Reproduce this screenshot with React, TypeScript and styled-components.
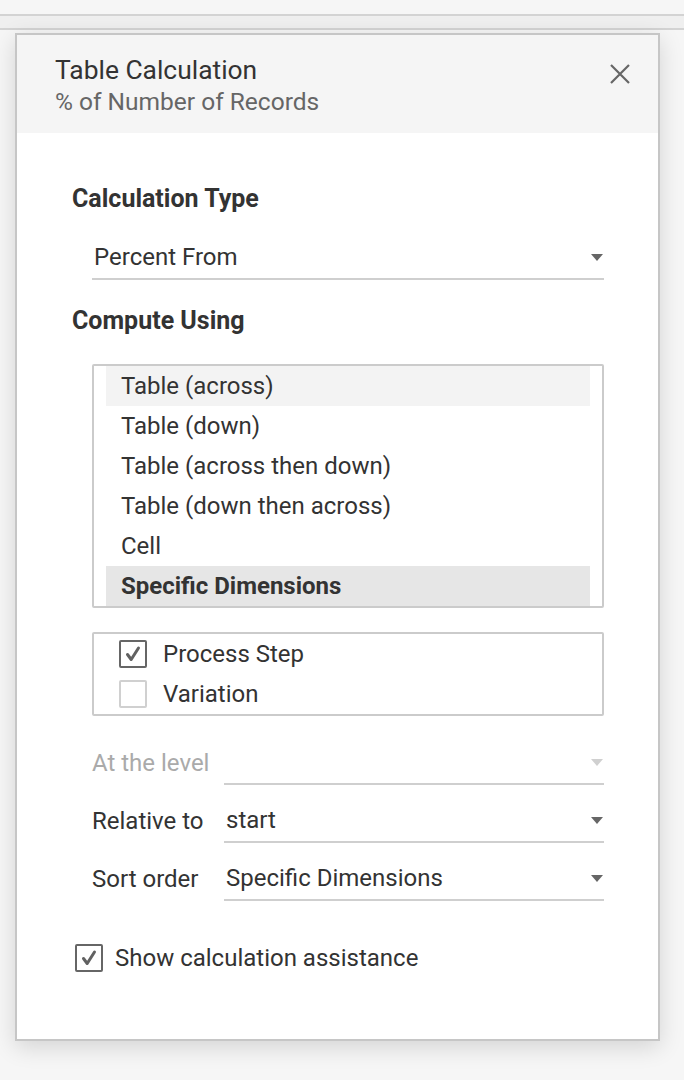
import React from "react";
import styled, { createGlobalStyle } from "styled-components";

const Global = createGlobalStyle`
  html, body { margin: 0; padding: 0; }
  body {
    background: #f6f6f6;
    font-family: Roboto, "Liberation Sans", sans-serif;
    color: #333;
    width: 684px;
    height: 1080px;
    overflow: hidden;
  }
`;

const Page = styled.div`
  display: flex;
  flex-direction: column;
  padding-top: 14px;
`;

const TopStrip = styled.div`
  height: 12px;
  border-top: 2px solid #d3d3d3;
  border-bottom: 2px solid #d3d3d3;
  background: #efefef;
`;

const Panel = styled.div`
  margin: 3px 0 0 15px;
  width: 645px;
  box-sizing: border-box;
  border: 2px solid #c6c6c6;
  background: #fff;
  box-shadow: 0 6px 22px rgba(0, 0, 0, 0.14);
  display: flex;
  flex-direction: column;
`;

const Header = styled.div`
  height: 98px;
  background: #f5f5f5;
  display: flex;
  align-items: flex-start;
  justify-content: space-between;
  padding: 19px 26px 0 38px;
  box-sizing: border-box;
`;

const TitleBlock = styled.div`
  display: flex;
  flex-direction: column;
`;

const Title = styled.div`
  font-size: 26.4px;
  line-height: 32px;
  color: #333;
`;

const Subtitle = styled.div`
  font-size: 24.5px;
  line-height: 32px;
  color: #666;
`;

const CloseButton = styled.button`
  border: none;
  background: none;
  padding: 0;
  margin-top: 8px;
  width: 24px;
  height: 24px;
  display: flex;
  align-items: center;
  justify-content: center;
`;

const Content = styled.div`
  padding: 51px 55px 66px 55px;
  display: flex;
  flex-direction: column;
`;

const SectionTitle = styled.div<{ $mt?: number }>`
  font-size: 25px;
  font-weight: 700;
  line-height: 30px;
  color: #333;
  margin-top: ${(p) => p.$mt ?? 0}px;
`;

const Indented = styled.div<{ $mt: number }>`
  margin-left: 20px;
  width: 512px;
  margin-top: ${(p) => p.$mt}px;
`;

const Select = styled.div<{ $disabled?: boolean }>`
  height: 44px;
  box-sizing: border-box;
  border-bottom: 2px solid #cfcfcf;
  display: flex;
  align-items: center;
  justify-content: space-between;
  padding: 0 1px 0 2px;
  font-size: 24px;
  color: ${(p) => (p.$disabled ? "#aaa" : "#333")};
  flex: 1;
`;

const Arrow = styled.span<{ $disabled?: boolean }>`
  width: 0;
  height: 0;
  border-left: 6px solid transparent;
  border-right: 6px solid transparent;
  border-top: 7px solid ${(p) => (p.$disabled ? "#d0d0d0" : "#666")};
`;

const ListBox = styled.div`
  border: 2px solid #cbcbcb;
  border-radius: 2px;
  padding: 0 12px;
  display: flex;
  flex-direction: column;
`;

const ListItem = styled.div<{ $bg?: string; $bold?: boolean }>`
  height: 40px;
  display: flex;
  align-items: center;
  padding-left: 15px;
  font-size: 24px;
  background: ${(p) => p.$bg ?? "transparent"};
  font-weight: ${(p) => (p.$bold ? 700 : 400)};
  color: #333;
`;

const CheckList = styled.div`
  border: 2px solid #cbcbcb;
  border-radius: 2px;
  display: flex;
  flex-direction: column;
`;

const CheckRow = styled.div<{ $pl: number }>`
  height: 40px;
  display: flex;
  align-items: center;
  gap: 16px;
  padding-left: ${(p) => p.$pl}px;
  font-size: 24px;
  color: #333;
`;

const Box = styled.span<{ $checked?: boolean }>`
  width: 28px;
  height: 28px;
  box-sizing: border-box;
  border: 2px solid ${(p) => (p.$checked ? "#666" : "#d0d0d0")};
  border-radius: 2px;
  display: flex;
  align-items: center;
  justify-content: center;
  background: #fff;
  flex: none;
`;

const FormRows = styled.div`
  margin-top: 25px;
  margin-left: 20px;
  width: 512px;
  display: flex;
  flex-direction: column;
  gap: 14px;
`;

const FormRow = styled.div`
  display: flex;
  align-items: flex-start;
`;

const Label = styled.div<{ $disabled?: boolean }>`
  width: 132px;
  height: 44px;
  display: flex;
  align-items: center;
  font-size: 24px;
  color: ${(p) => (p.$disabled ? "#aaa" : "#333")};
  flex: none;
`;

const FooterCheck = styled.div`
  margin-top: 42px;
  margin-left: 3px;
  display: flex;
  align-items: center;
  gap: 12px;
  font-size: 24px;
  height: 30px;
  color: #333;
`;

const Check = () => (
  <svg width="18" height="18" viewBox="0 0 18 18">
    <polyline points="3.5,9.5 7.2,14.5 14.5,3" fill="none" stroke="#616161" strokeWidth="3" strokeLinejoin="round" strokeLinecap="round" />
  </svg>
);

const items = [
  { t: "Table (across)", bg: "#f3f3f3" },
  { t: "Table (down)" },
  { t: "Table (across then down)" },
  { t: "Table (down then across)" },
  { t: "Cell" },
  { t: "Specific Dimensions", bg: "#e6e6e6", bold: true },
];

export default function App() {
  return (
    <>
      <Global />
      <Page>
        <TopStrip />
        <Panel>
          <Header>
            <TitleBlock>
              <Title>Table Calculation</Title>
              <Subtitle>% of Number of Records</Subtitle>
            </TitleBlock>
            <CloseButton aria-label="Close">
              <svg width="22" height="22" viewBox="0 0 22 22">
                <path d="M2 2 L20 20 M20 2 L2 20" stroke="#666" strokeWidth="2.2" fill="none" />
              </svg>
            </CloseButton>
          </Header>
          <Content>
            <SectionTitle>Calculation Type</SectionTitle>
            <Indented $mt={22}>
              <Select>
                Percent From
                <Arrow />
              </Select>
            </Indented>
            <SectionTitle $mt={26}>Compute Using</SectionTitle>
            <Indented $mt={28}>
              <ListBox>
                {items.map((it) => (
                  <ListItem key={it.t} $bg={it.bg} $bold={it.bold}>
                    {it.t}
                  </ListItem>
                ))}
              </ListBox>
            </Indented>
            <Indented $mt={24}>
              <CheckList>
                <CheckRow $pl={25}>
                  <Box $checked>
                    <Check />
                  </Box>
                  Process Step
                </CheckRow>
                <CheckRow $pl={25}>
                  <Box />
                  Variation
                </CheckRow>
              </CheckList>
            </Indented>
            <FormRows>
              <FormRow>
                <Label $disabled>At the level</Label>
                <Select $disabled>
                  <span />
                  <Arrow $disabled />
                </Select>
              </FormRow>
              <FormRow>
                <Label>Relative to</Label>
                <Select>
                  start
                  <Arrow />
                </Select>
              </FormRow>
              <FormRow>
                <Label>Sort order</Label>
                <Select>
                  Specific Dimensions
                  <Arrow />
                </Select>
              </FormRow>
            </FormRows>
            <FooterCheck>
              <Box $checked>
                <Check />
              </Box>
              Show calculation assistance
            </FooterCheck>
          </Content>
        </Panel>
      </Page>
    </>
  );
}
